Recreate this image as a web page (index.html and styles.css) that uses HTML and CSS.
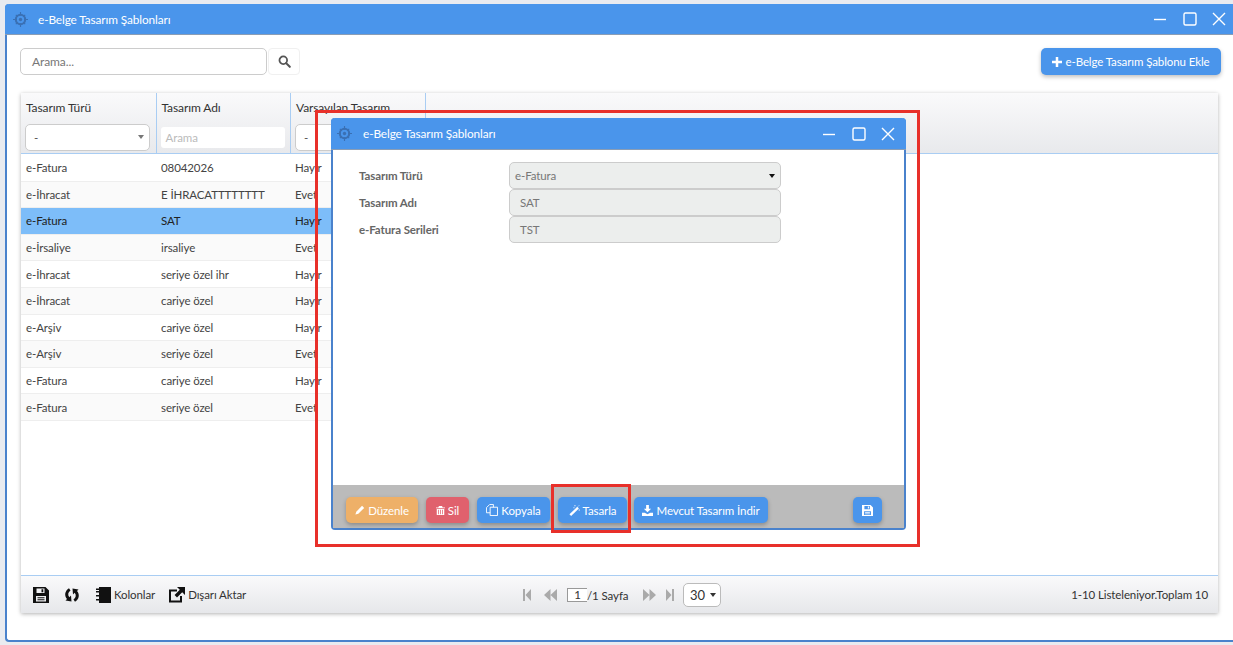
FILE: index.html
```html
<!DOCTYPE html>
<html lang="tr">

<head>
    <meta charset="UTF-8">
    <title>e-Belge Tasarım Şablonları</title>
    <link rel="stylesheet" href="styles.css">
</head>

<body>
    <svg width="0" height="0" class="defs">
        <symbol id="logo" viewBox="0 0 16 16">
            <path d="M8 0v4M8 12v4M0 8h4M12 8h4M3 3l2 2M13 3l-2 2M3 13l2-2M13 13l-2-2" stroke="#3a70b4" stroke-width="1.200" />
            <circle cx="8" cy="8" r="5" fill="none" stroke="#3a70b4" stroke-width="2.200" />
            <circle cx="8" cy="8" r="1.800" fill="#3a70b4" />
        </symbol>
        <symbol id="floppy" viewBox="0 0 16 16">
            <path fill-rule="evenodd" d="M0 0h12.500L16 3.500V16H0zM3.500 1.500v4.500h8V1.500zM3 9v5.500h10V9zM8.500 2.200h1.800v3H8.500zM4.500 10.300h7v1h-7zM4.500 12.300h7v1h-7z" />
        </symbol>
    </svg>

    <div class="window">
        <div class="titlebar">
            <svg class="logo"><use href="#logo" /></svg>
            <span class="title">e-Belge Tasarım Şablonları</span>
            <span class="win-btns">
                <svg class="win-icon" viewBox="0 0 16 16"><path d="M1 8.500h12" /></svg>
                <svg class="win-icon" viewBox="0 0 16 16"><rect x="2" y="2" width="12" height="12" rx="1.500" /></svg>
                <svg class="win-icon" viewBox="0 0 16 16"><path d="M2 2l12 12M14 2L2 14" /></svg>
            </span>
        </div>

        <div class="content">
            <div class="toolbar">
                <div class="search-box">Arama...</div>
                <div class="search-btn">
                    <svg viewBox="0 0 16 16" width="13" height="13"><circle cx="6.500" cy="6.500" r="4.700" fill="none" stroke="#555" stroke-width="2.200" /><path d="M10 10l4.500 4.500" stroke="#555" stroke-width="2.600" stroke-linecap="round" /></svg>
                </div>
                <button class="btn btn-add">
                    <svg viewBox="0 0 12 12" width="10" height="10"><path d="M4.500 0h3v4.500H12v3H7.500V12h-3V7.500H0v-3h4.500z" fill="#fff" /></svg>
                    e-Belge Tasarım Şablonu Ekle
                </button>
            </div>

            <div class="grid">
                <div class="grid-head">
                    <div class="head-row">
                        <div class="hcell">Tasarım Türü</div>
                        <div class="hcell">Tasarım Adı</div>
                        <div class="hcell">Varsayılan Tasarım</div>
                    </div>
                    <div class="head-row filter-row">
                        <div class="fcell"><div class="filter-select">-<i class="caret caret-grey"></i></div></div>
                        <div class="fcell"><div class="filter-input">Arama</div></div>
                        <div class="fcell"><div class="filter-select">-</div></div>
                    </div>
                </div>

                <div class="grid-body">
                    <div class="row"><span>e-Fatura</span><span>08042026</span><span>Hayır</span></div>
                    <div class="row alt"><span>e-İhracat</span><span>E İHRACATTTTTTTT</span><span>Evet</span></div>
                    <div class="row selected"><span>e-Fatura</span><span>SAT</span><span>Hayır</span></div>
                    <div class="row alt"><span>e-İrsaliye</span><span>irsaliye</span><span>Evet</span></div>
                    <div class="row"><span>e-İhracat</span><span>seriye özel ihr</span><span>Hayır</span></div>
                    <div class="row alt"><span>e-İhracat</span><span>cariye özel</span><span>Hayır</span></div>
                    <div class="row"><span>e-Arşiv</span><span>cariye özel</span><span>Hayır</span></div>
                    <div class="row alt"><span>e-Arşiv</span><span>seriye özel</span><span>Evet</span></div>
                    <div class="row"><span>e-Fatura</span><span>cariye özel</span><span>Hayır</span></div>
                    <div class="row alt"><span>e-Fatura</span><span>seriye özel</span><span>Evet</span></div>
                </div>

                <div class="grid-foot">
                    <div class="foot-left">
                        <svg class="foot-icon"><use href="#floppy" /></svg>
                        <svg class="foot-icon" viewBox="0 0 16 16"><path d="M5 1.200C.8 3.800 0 8.500 3 12L1.500 13.500 7.500 14.500 7 8.500 5.300 10.200C3.500 7.800 4 5.200 6.500 3.500zM11 14.800C15.200 12.200 16 7.500 13 4L14.500 2.500 8.500 1.500 9 7.500 10.700 5.800C12.500 8.200 12 10.800 9.500 12.500z" /></svg>
                        <span class="foot-item">
                            <svg class="foot-icon" viewBox="0 0 16 16"><path d="M4 0h12v16H4v-2.500H1v-1.400h3V9.500H1V8h3V5.500H1V4h3V3H1V1.600h3z" /></svg>
                            Kolonlar
                        </span>
                        <span class="foot-item export">
                            <svg class="foot-icon" viewBox="0 0 16 16"><path fill-rule="evenodd" d="M0 2.500h8v2H2v9h9V9h2v6.500H0z" /><path d="M8 0h8v8l-2.800-2.800L8 10.400 5.600 8l5.200-5.200z" /></svg>
                            Dışarı Aktar
                        </span>
                    </div>
                    <div class="pager">
                        <svg class="pg-icon pg-end" viewBox="0 0 8 12"><path d="M0 0h2v12H0zM8 0v12L2.500 6z" /></svg>
                        <svg class="pg-icon pg-step" viewBox="0 0 13 12"><path d="M6.500 0v12L0 6zM13 0v12L6.500 6z" /></svg>
                        <span class="pg-input">1</span>
                        <span class="pg-text">/1 Sayfa</span>
                        <svg class="pg-icon pg-step" viewBox="0 0 13 12"><path d="M0 0v12l6.500-6zM6.500 0v12L13 6z" /></svg>
                        <svg class="pg-icon pg-end" viewBox="0 0 8 12"><path d="M0 0v12l5.500-6zM6 0h2v12H6z" /></svg>
                        <span class="pg-size">30<i class="caret"></i></span>
                    </div>
                    <div class="foot-info">1-10 Listeleniyor.Toplam 10</div>
                </div>
            </div>
        </div>
    </div>

    <div class="dialog">
        <div class="titlebar dialog-title">
            <svg class="logo"><use href="#logo" /></svg>
            <span class="title">e-Belge Tasarım Şablonları</span>
            <span class="win-btns">
                <svg class="win-icon" viewBox="0 0 16 16"><path d="M1 8.500h12" /></svg>
                <svg class="win-icon" viewBox="0 0 16 16"><rect x="2" y="2" width="12" height="12" rx="1.500" /></svg>
                <svg class="win-icon" viewBox="0 0 16 16"><path d="M2 2l12 12M14 2L2 14" /></svg>
            </span>
        </div>
        <div class="dialog-body">
            <div class="form-row">
                <label>Tasarım Türü</label>
                <div class="field field-select">e-Fatura<i class="caret caret-dark"></i></div>
            </div>
            <div class="form-row">
                <label>Tasarım Adı</label>
                <div class="field">SAT</div>
            </div>
            <div class="form-row">
                <label>e-Fatura Serileri</label>
                <div class="field">TST</div>
            </div>
        </div>
        <div class="dialog-foot">
            <button class="btn btn-orange">
                <svg viewBox="0 0 12 12" width="10" height="10"><path d="M8.500 1l2.500 2.500-7 7L.5 11.500 1.500 8z" fill="#fff" /></svg>
                Düzenle
            </button>
            <button class="btn btn-red">
                <svg viewBox="0 0 12 12" width="9" height="11"><path fill-rule="evenodd" d="M4 0h4l1 2h3v1H0V2h3zM1 4h10v8H1zM3 5v6h1V5zM5.500 5v6h1V5zM8 5v6h1V5z" fill="#fff" /></svg>
                Sil
            </button>
            <button class="btn btn-copy">
                <svg viewBox="0 0 13 13" width="12" height="12"><path d="M4.500 3.500h8v9h-8zM4.500 9.500H.5V4L4 .5h4v3" fill="none" stroke="#fff" /></svg>
                Kopyala
            </button>
            <button class="btn btn-design">
                <svg viewBox="0 0 12 12" width="11" height="11"><path d="M9 2l1.800 1.800L2.300 12 .5 10.200z" fill="#fff" /><path d="M6.500 0v1.500M10.500 5.500H12M6 3H4.800M11 .5l-1 1" stroke="#fff" stroke-width=".9" /></svg>
                Tasarla
            </button>
            <button class="btn btn-get">
                <svg viewBox="0 0 12 12" width="11" height="11"><path d="M4.500 0h3v4H10L6 8 2 4h2.500zM0 8.500h3L6 10l3-1.500h3V12H0z" fill="#fff" /></svg>
                Mevcut Tasarım İndir
            </button>
            <button class="btn btn-save">
                <svg width="11" height="11" fill="#fff"><use href="#floppy" /></svg>
            </button>
        </div>
    </div>

    <div class="red-box big"></div>
    <div class="red-box small"></div>
</body>

</html>
```
FILE: styles.css
```css
html,
body {
    margin: 0;
    height: 645px;
    overflow: hidden;
}

body {
    font-family: Lato, "Open Sans", sans-serif;
    font-size: 11.500px;
    letter-spacing: -0.1px;
    color: #444;
    background: #e9ebf0;
    padding: 4px 0 0 5px;
    box-sizing: border-box;
}

svg {
    flex: none;
}

.defs {
    position: absolute;
}

.window {
    height: 638px;
    background: #fff;
    border: 2px solid #4a82cc;
    border-top: 0;
    border-right: 0;
    border-radius: 4px 0 0 4px;
    box-sizing: border-box;
}

.titlebar {
    height: 30px;
    margin-left: -2px;
    background: #4a95eb;
    color: #fff;
    display: flex;
    align-items: center;
    padding-left: 8px;
    border-radius: 4px 0 0 0;
    box-shadow: 0 1px 0 #8a9db5;
}

.logo {
    width: 15px;
    height: 15px;
    margin-right: 10px;
}

.title {
    font-size: 11.800px;
}

.win-btns {
    margin-left: auto;
    display: flex;
    gap: 13px;
    padding-right: 6px;
}

.win-icon {
    width: 16px;
    height: 16px;
    fill: none;
    stroke: #fff;
    stroke-width: 1.400;
}

.content {
    padding: 14px 10px 0 13px;
}

.toolbar {
    display: flex;
    height: 27px;
}

.search-box {
    width: 234px;
    border: 1px solid #ccc;
    border-radius: 5px;
    padding-left: 11px;
    line-height: 25px;
    color: #777;
    font-size: 12px;
}

.search-btn {
    width: 32px;
    margin-left: 1px;
    border: 1px solid #f0f0f0;
    border-radius: 4px;
    display: flex;
    align-items: center;
    justify-content: center;
    box-sizing: border-box;
}

.btn {
    height: 27px;
    padding: 0;
    border: 0;
    border-radius: 5px;
    background: #4a95eb;
    color: #fff;
    font-family: inherit;
    font-size: 11.500px;
    letter-spacing: -0.1px;
    white-space: nowrap;
    display: flex;
    align-items: center;
    justify-content: center;
    gap: 3px;
    box-shadow: 0 2px 4px rgba(0, 0, 0, 0.25);
}

.btn-add {
    margin-left: auto;
    width: 180px;
    margin-right: 2px;
}

.grid {
    margin-top: 18px;
    margin-left: 1px;
    width: 1197px;
    height: 520px;
    display: flex;
    flex-direction: column;
    box-shadow: 0 1px 4px rgba(0, 0, 0, 0.3);
}

.grid-head {
    height: 60px;
    background: linear-gradient(#fafafb, #e8e9ec);
    border-bottom: 1px solid #a9cdf3;
}

.head-row {
    display: flex;
    height: 29px;
    color: #333;
    font-size: 12px;
}

.filter-row {
    height: 31px;
    font-size: 11.500px;
}

.hcell,
.fcell {
    box-sizing: border-box;
    width: 134.500px;
    padding: 7px 0 0 5px;
    border-right: 1px solid #a9cdf3;
}

.hcell:first-child,
.fcell:first-child {
    width: 135.500px;
}

.fcell {
    padding: 2px 5px 0 4px;
}

.fcell:first-child {
    padding-right: 6px;
}

.filter-select {
    position: relative;
    height: 27px;
    box-sizing: border-box;
    padding-left: 8px;
    line-height: 25px;
    background: #fff;
    border: 1px solid #ccc;
    border-radius: 5px;
    color: #555;
}

.filter-input {
    height: 21px;
    margin-top: 3px;
    padding-left: 5px;
    line-height: 21px;
    background: #fff;
    border-radius: 3px;
    color: #bbb;
}

.caret {
    display: inline-block;
    border-left: 3.500px solid transparent;
    border-right: 3.500px solid transparent;
    border-top: 4px solid #333;
}

.caret-grey {
    position: absolute;
    right: 5px;
    top: 10px;
    border-top-color: #777;
}

.grid-body {
    flex: 1;
    padding-top: 1px;
}

.row {
    width: 404px;
    height: 26.600px;
    box-sizing: border-box;
    display: flex;
    align-items: center;
    border-bottom: 1px solid #eee;
    color: #444;
}

.row span {
    width: 134px;
    padding-left: 5px;
    box-sizing: border-box;
}

.row span:first-child {
    width: 135px;
}

.row.alt {
    background: #fafafa;
}

.row.selected {
    background: #7dbdf9;
    color: #222;
}

.grid-foot {
    height: 37px;
    background: linear-gradient(#fafafb, #e6e7ea);
    border-top: 1px solid #a9cdf3;
    display: flex;
    align-items: center;
    color: #333;
    position: relative;
}

.foot-left {
    display: flex;
    align-items: center;
    gap: 15px;
    padding-left: 12px;
}

.foot-item {
    display: flex;
    align-items: center;
    gap: 3px;
}

.foot-item.export {
    margin-left: -1px;
}

.foot-icon {
    width: 16px;
    height: 16px;
    fill: #111;
}

.pager {
    position: absolute;
    left: 502px;
    top: 6px;
    display: flex;
    align-items: center;
    height: 26px;
}

.pg-icon {
    height: 12px;
    fill: #aaa;
}

.pg-end {
    width: 8px;
}

.pg-step {
    width: 13px;
    margin: 0 10px 0 13px;
}

.pg-input {
    width: 19px;
    height: 12px;
    line-height: 12px;
    text-align: center;
    border: 1px solid #999;
    border-right: 0;
    background: #fff;
}

.pg-text {
    white-space: nowrap;
    width: 43px;
}

.pg-size {
    margin-left: 9px;
    width: 38px;
    height: 24px;
    box-sizing: border-box;
    border: 1px solid #bbb;
    border-radius: 5px;
    background: #fff;
    display: flex;
    align-items: center;
    gap: 5px;
    padding-left: 6px;
    font-size: 13px;
}

.foot-info {
    margin-left: auto;
    padding-right: 10px;
}

.dialog {
    position: absolute;
    left: 331px;
    top: 118px;
    width: 575px;
    height: 412px;
    box-sizing: border-box;
    background: #fff;
    border: 2px solid #4a82cc;
    border-top: 0;
    border-radius: 4px;
    display: flex;
    flex-direction: column;
}

.dialog-title {
    height: 31px;
    flex: none;
    margin: 0 -2px;
    padding-left: 6px;
    border-radius: 4px 4px 0 0;
}

.dialog-title .logo {
    margin-right: 11px;
}

.dialog-title .win-btns {
    padding-right: 10px;
}

.dialog-body {
    flex: 1;
    padding-top: 13px;
}

.form-row {
    display: flex;
    align-items: center;
    height: 27px;
}

.form-row label {
    width: 150px;
    padding-left: 26px;
    font-weight: bold;
    font-size: 11.500px;
    color: #666;
}

.field {
    width: 272px;
    height: 27px;
    box-sizing: border-box;
    line-height: 25px;
    padding-left: 10px;
    background: #eceeed;
    border: 1px solid #ccc;
    border-radius: 5px;
    color: #777;
}

.field-select {
    padding-left: 5px;
    position: relative;
}

.caret-dark {
    position: absolute;
    right: 5px;
    top: 11px;
    border-top-color: #111;
}

.dialog-foot {
    height: 43px;
    flex: none;
    background: #bbb;
    display: flex;
    align-items: flex-start;
    padding: 12px 0 0 13px;
    box-sizing: border-box;
}

.dialog-foot .btn {
    height: 26px;
    margin-right: 8px;
}

.dialog-foot .btn-orange {
    background: #eeb068;
    width: 72px;
}

.dialog-foot .btn-red {
    background: #e0616d;
    width: 43px;
}

.btn-copy {
    width: 73px;
}

.btn-design {
    width: 69px;
}

.dialog-foot .btn-design {
    margin-right: 7px;
}

.btn-get {
    width: 134px;
}

.btn-save {
    margin-left: auto;
    width: 29px;
}

.dialog-foot .btn-save {
    margin-right: 22px;
}

.red-box {
    position: absolute;
    box-sizing: border-box;
    border: 3px solid #e8302a;
    pointer-events: none;
}

.red-box.big {
    left: 315px;
    top: 110px;
    width: 605px;
    height: 437px;
}

.red-box.small {
    left: 551px;
    top: 484px;
    width: 80px;
    height: 49px;
}
```
